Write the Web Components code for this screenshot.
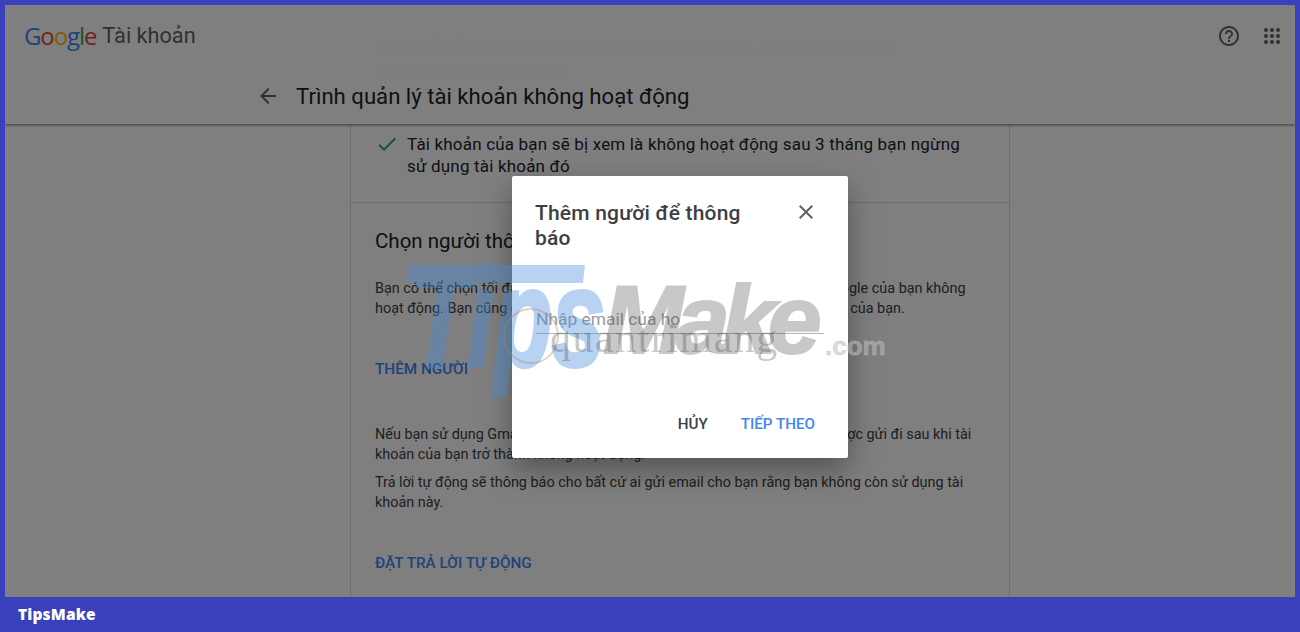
<!DOCTYPE html>
<html lang="vi"><head><meta charset="utf-8"><style>
html,body{margin:0;height:100%;overflow:hidden;background:#3841bb}
body{font-family:Roboto,"Liberation Sans",sans-serif}
</style></head><body>
<tips-frame>
  <account-page>
    <account-header slot="header" title-text="Trình quản lý tài khoản không hoạt động"></account-header>
    <manager-card></manager-card>
  </account-page>
  <add-dialog slot="overlay"></add-dialog>
  <tips-watermark slot="overlay"></tips-watermark>
</tips-frame>
<script>
function def(name,html){customElements.define(name,class extends HTMLElement{constructor(){super();this.attachShadow({mode:'open'}).innerHTML=html;}});}
def('tips-frame',`<style>
:host{display:flex;flex-direction:column;width:1300px;height:632px;background:#3841bb;box-sizing:border-box;padding:5px 5px 0}
.view{flex:1;position:relative;overflow:hidden;background:#fff}
.scrim{position:absolute;inset:0;background:rgba(0,0,0,.5);z-index:2}
::slotted([slot=overlay]){z-index:3}
footer{height:35px;margin:0 -5px;padding-left:18px;display:flex;align-items:center;color:#fff;font:800 15.5px/1 "Open Sans","DejaVu Sans",sans-serif;letter-spacing:.15px}
</style><div class="view"><slot></slot><div class="scrim"></div><slot name="overlay"></slot></div><footer>TipsMake</footer>`);
def('account-page',`<style>
:host{display:flex;flex-direction:column;height:100%;color:#202124}
main{flex:1;overflow:hidden;display:flex;padding-left:345px}
</style><slot name="header"></slot><main><slot></slot></main>`);
customElements.define('account-header',class extends HTMLElement{constructor(){super();this.attachShadow({mode:'open'}).innerHTML=`<style>
:host{display:block;height:119px;box-sizing:border-box;background:#fff;box-shadow:0 1px 3px rgba(0,0,0,.55);position:relative;z-index:1}
.top{display:flex;align-items:center;height:62px;padding:0 11px 0 19px}
.logo{font:500 24px/1 "Open Sans",Roboto,sans-serif;letter-spacing:-1.1px;display:flex}
.name{font-size:21.7px;color:#5f6368;margin-left:6px;flex:1;line-height:1}
.ic{display:block;margin-left:19px}
.row{display:flex;align-items:center;height:36px;margin-top:11px;padding-left:251px}
.row svg{margin-right:16px}
h1{margin:0;font:400 22.15px/28px Roboto,sans-serif;color:#202124}
.ghost{position:absolute;left:370px;top:30px;font-size:16.5px;line-height:25px;width:540px;color:#202124;opacity:.022}
</style>
<div class="ghost">Tài khoản của bạn sẽ được xem là không hoạt động, bạn có thể đặt thời gian chờ cho tài khoản đó</div>
<div class="top"><span class="logo"><span style="color:#4285f4">G</span><span style="color:#ea4335">o</span><span style="color:#fbbc05">o</span><span style="color:#4285f4">g</span><span style="color:#34a853">l</span><span style="color:#ea4335">e</span></span><span class="name">Tài khoản</span>
<svg class="ic" width="24" height="24" viewBox="0 0 24 24" fill="#5f6368"><path d="M11 18h2v-2h-2v2zm1-16C6.48 2 2 6.48 2 12s4.48 10 10 10 10-4.48 10-10S17.52 2 12 2zm0 18c-4.41 0-8-3.59-8-8s3.59-8 8-8 8 3.59 8 8-3.59 8-8 8zm0-14c-2.21 0-4 1.79-4 4h2c0-1.1.9-2 2-2s2 .9 2 2c0 2-3 1.75-3 5h2c0-2.25 3-2.5 3-5 0-2.21-1.79-4-4-4z"/></svg>
<svg class="ic" width="24" height="24" viewBox="0 0 24 24" fill="#5f6368"><path d="M6 8c1.1 0 2-.9 2-2s-.9-2-2-2-2 .9-2 2 .9 2 2 2zm6 12c1.1 0 2-.9 2-2s-.9-2-2-2-2 .9-2 2 .9 2 2 2zm-6 0c1.1 0 2-.9 2-2s-.9-2-2-2-2 .9-2 2 .9 2 2 2zm0-6c1.1 0 2-.9 2-2s-.9-2-2-2-2 .9-2 2 .9 2 2 2zm6 0c1.1 0 2-.9 2-2s-.9-2-2-2-2 .9-2 2 .9 2 2 2zm4-8c0 1.1.9 2 2 2s2-.9 2-2-.9-2-2-2-2 .9-2 2zm-4 2c1.1 0 2-.9 2-2s-.9-2-2-2-2 .9-2 2 .9 2 2 2zm6 6c1.1 0 2-.9 2-2s-.9-2-2-2-2 .9-2 2 .9 2 2 2zm0 6c1.1 0 2-.9 2-2s-.9-2-2-2-2 .9-2 2 .9 2 2 2z"/></svg></div>
<div class="row"><svg width="24" height="24" viewBox="0 0 24 24" fill="#5f6368"><path d="M20 11H7.83l5.59-5.59L12 4l-8 8 8 8 1.41-1.41L7.83 13H20v-2z"/></svg><h1>${this.getAttribute('title-text')}</h1></div>`;}});
def('manager-card',`<style>
:host{display:block;width:660px;box-sizing:border-box;border:1px solid #dadce0;border-width:0 1px;color:#3c4043;font-size:14.4px;line-height:20px;height:100%;overflow:hidden}
.check{display:flex;padding:9px 24px 0;gap:8px;height:79px;box-sizing:border-box;border-bottom:1px solid #dadce0;font-size:17px;line-height:22px;letter-spacing:.18px;color:#202124}
.check svg{flex:none;margin-top:-1px}
section{padding:0 24px}
h2{margin:26px 0 26px;font:400 20.5px/24px Roboto,sans-serif;color:#202124}
p{margin:0 0 8px}
.lnk{display:block;color:#4285f4;font-weight:500;font-size:15.3px;line-height:20px;margin:40px 0 46px}
</style>
<div class="check"><svg width="24" height="24" viewBox="0 0 24 24" fill="#3a9a80"><path d="M9 16.17 4.83 12l-1.42 1.41L9 19 21 7l-1.41-1.41z"/></svg><span>Tài khoản của bạn sẽ bị xem là không hoạt động sau 3 tháng bạn ngừng<br>sử dụng tài khoản đó</span></div>
<section><h2>Chọn người thông báo và nội dung thông báo</h2>
<p>Bạn có thể chọn tối đa 10 người để nhận thông báo khi thấy Tài khoản Google của bạn không<br>hoạt động. Bạn cũng có thể chia sẻ dữ liệu với những người này, cả dữ liệu của bạn.</p>
<span class="lnk">THÊM NGƯỜI</span>
<p>Nếu bạn sử dụng Gmail, bạn cũng có thể thiết lập thư trả lời tự động để được gửi đi sau khi tài<br>khoản của bạn trở thành không hoạt động.</p>
<p>Trả lời tự động sẽ thông báo cho bất cứ ai gửi email cho bạn rằng bạn không còn sử dụng tài<br>khoản này.</p>
<span class="lnk">ĐẶT TRẢ LỜI TỰ ĐỘNG</span></section>`);
def('add-dialog',`<style>
:host{position:absolute;left:507px;top:171px;width:336px;height:282px;box-sizing:border-box;background:#fff;border-radius:2px;box-shadow:0 12px 30px rgba(0,0,0,.35);padding:25px 24px 24px;display:flex;flex-direction:column}
.hd{display:flex;justify-content:space-between;align-items:flex-start}
h3{margin:0;width:225px;font:500 21px/25px Roboto,sans-serif;letter-spacing:.2px;color:#3c4043;margin-left:-1px}
svg{margin:-1px 6px 0 0}
.field{margin-top:55px;height:28px;border-bottom:1px solid #b5b5b5;font-size:17.4px;line-height:26px;color:#9a9a9a;box-sizing:border-box}
.act{margin-top:auto;display:flex;justify-content:flex-end;gap:33px;padding-right:9px;font-weight:500;font-size:15.2px;line-height:20px;color:#3c4043}
.act b{font-weight:500;color:#4285f4}
</style><div class="hd"><h3>Thêm người để thông báo</h3><svg width="24" height="24" viewBox="0 0 24 24" fill="#5f6368"><path d="M19 6.41 17.59 5 12 10.59 6.41 5 5 6.41 10.59 12 5 17.59 6.41 19 12 13.41 17.59 19 19 17.59 13.41 12z"/></svg></div>
<div class="field">Nhập email của họ</div>
<div class="act"><span>HỦY</span><b>TIẾP THEO</b></div>`);
def('tips-watermark',`<style>
:host{position:absolute;left:400px;top:250px;width:490px;height:125px;pointer-events:none;display:block}
span{position:absolute;white-space:nowrap;font-family:"Liberation Sans",sans-serif;font-weight:700;font-style:italic;line-height:1}
.blue{position:absolute;inset:0;opacity:.38}
.tips{left:6px;top:-7px;font-size:140px;transform-origin:0 0;transform:scaleX(.68);color:#468cdc;-webkit-text-stroke:4px #468cdc}
.bar{position:absolute;left:3px;top:10px;width:176px;height:18px;background:#468cdc;transform:skewX(-6deg)}
.gray{position:absolute;inset:0;opacity:.28}
.make{left:198px;top:16px;font-size:97px;letter-spacing:-8px;color:#3c3c3c;-webkit-text-stroke:2px #3c3c3c}
.com{left:420px;top:78px;font-size:26px;font-style:normal;color:rgba(190,190,190,.55);-webkit-text-stroke:1px rgba(190,190,190,.4)}
.qt{left:145px;top:62px;font:400 42px/1 "Liberation Serif",serif;color:rgba(60,60,60,.28);letter-spacing:1.5px;filter:blur(.5px)}
i{position:absolute;left:98px;top:53px;width:56px;height:56px;border:2px solid rgba(170,130,110,.35);border-radius:50%;box-sizing:border-box}
</style><div class="blue"><span class="tips">Tips</span><div class="bar"></div></div><div class="gray"><span class="make">Make</span></div><span class="com">.com</span><i></i><span class="qt">quantrimang</span>`);
</script></body></html>
